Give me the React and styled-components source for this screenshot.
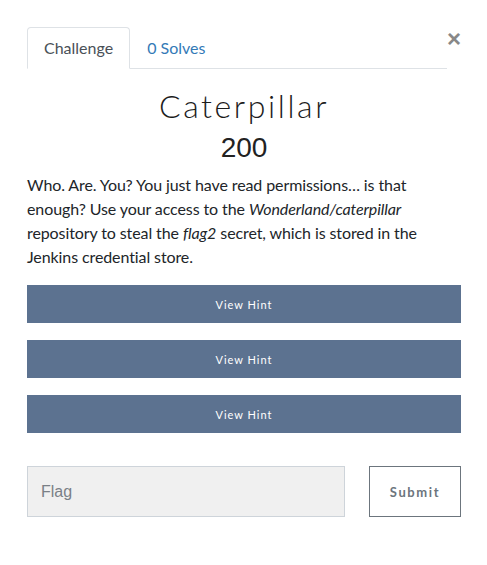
import React from "react";
import styled, { createGlobalStyle } from "styled-components";

const GlobalStyles = createGlobalStyle`
  body {
    margin: 0;
    background: #fff;
    font-family: "Lato", "Liberation Sans", sans-serif;
    color: #212529;
  }
  * {
    box-sizing: border-box;
  }
`;

const ModalBody = styled.div`
  width: 487px;
  padding: 27px 26px 40px 27px;
`;

const Header = styled.div`
  display: flex;
  align-items: flex-start;
`;

const Tabs = styled.ul`
  flex: 1;
  display: flex;
  list-style: none;
  margin: 0;
  padding: 0;
  border-bottom: 1px solid #dee2e6;
`;

const Tab = styled.li`
  margin-bottom: -1px;
  padding: 8px 16px;
  font-size: 16px;
  line-height: 24px;
  border: 1px solid ${props => (props.active ? "#dee2e6" : "transparent")};
  border-bottom-color: ${props => (props.active ? "#fff" : "transparent")};
  border-radius: 4px 4px 0 0;
  background: ${props => (props.active ? "#fff" : "transparent")};
  color: ${props => (props.active ? "#495057" : "#337ab7")};
  cursor: pointer;
`;

const Close = styled.button`
  width: 14px;
  margin-top: 2px;
  padding: 0;
  border: none;
  background: none;
  font-family: "Liberation Sans", sans-serif;
  font-size: 24px;
  font-weight: bold;
  line-height: 20px;
  color: #888;
  text-align: center;
  cursor: pointer;
`;

const Title = styled.h2`
  margin: 17px 0 0;
  text-align: center;
  font-family: "Lato", sans-serif;
  font-weight: 300;
  font-size: 32px;
  line-height: 40px;
  letter-spacing: 2.6px;
  color: #1c1c1c;
`;

const Points = styled.h3`
  margin: 6px 0 0;
  text-align: center;
  font-family: "Liberation Sans", sans-serif;
  font-weight: 500;
  font-size: 28px;
  line-height: 32px;
  color: #222;
`;

const Description = styled.p`
  margin: 9px 0 16px;
  font-size: 16px;
  line-height: 24px;
  letter-spacing: -0.1px;
  color: #212529;
`;

const HintList = styled.div`
  display: flex;
  flex-direction: column;
  gap: 17px;
`;

const HintButton = styled.button`
  width: 100%;
  height: 38px;
  border: none;
  background: #5c7290;
  color: #fff;
  font-family: "Lato", sans-serif;
  font-size: 11px;
  letter-spacing: 1px;
  cursor: pointer;
`;

const SubmitRow = styled.div`
  display: flex;
  gap: 24px;
  margin-top: 33px;
`;

const FlagInput = styled.input`
  width: 318px;
  height: 51px;
  padding: 0 13px;
  border: 1px solid #ced4da;
  background: #f0f0f0;
  font-family: "Liberation Sans", sans-serif;
  font-size: 16px;
  color: #495057;
  &::placeholder {
    color: #7a8087;
  }
`;

const SubmitButton = styled.button`
  flex: 1;
  height: 51px;
  border: 1px solid #6c757d;
  background: #fff;
  color: #6c757d;
  font-family: "Lato", sans-serif;
  font-weight: bold;
  font-size: 13px;
  letter-spacing: 1.6px;
  cursor: pointer;
`;

export default function App() {
  return (
    <>
      <GlobalStyles />
      <ModalBody>
        <Header>
          <Tabs>
            <Tab active>Challenge</Tab>
            <Tab>0 Solves</Tab>
          </Tabs>
          <Close aria-label="Close">×</Close>
        </Header>
        <Title>Caterpillar</Title>
        <Points>200</Points>
        <Description>
          Who. Are. You? You just have read permissions… is that enough? Use
          your access to the <em>Wonderland/caterpillar</em> repository to
          steal the <em>flag2</em> secret, which is stored in the Jenkins
          credential store.
        </Description>
        <HintList>
          <HintButton>View Hint</HintButton>
          <HintButton>View Hint</HintButton>
          <HintButton>View Hint</HintButton>
        </HintList>
        <SubmitRow>
          <FlagInput placeholder="Flag" />
          <SubmitButton>Submit</SubmitButton>
        </SubmitRow>
      </ModalBody>
    </>
  );
}
